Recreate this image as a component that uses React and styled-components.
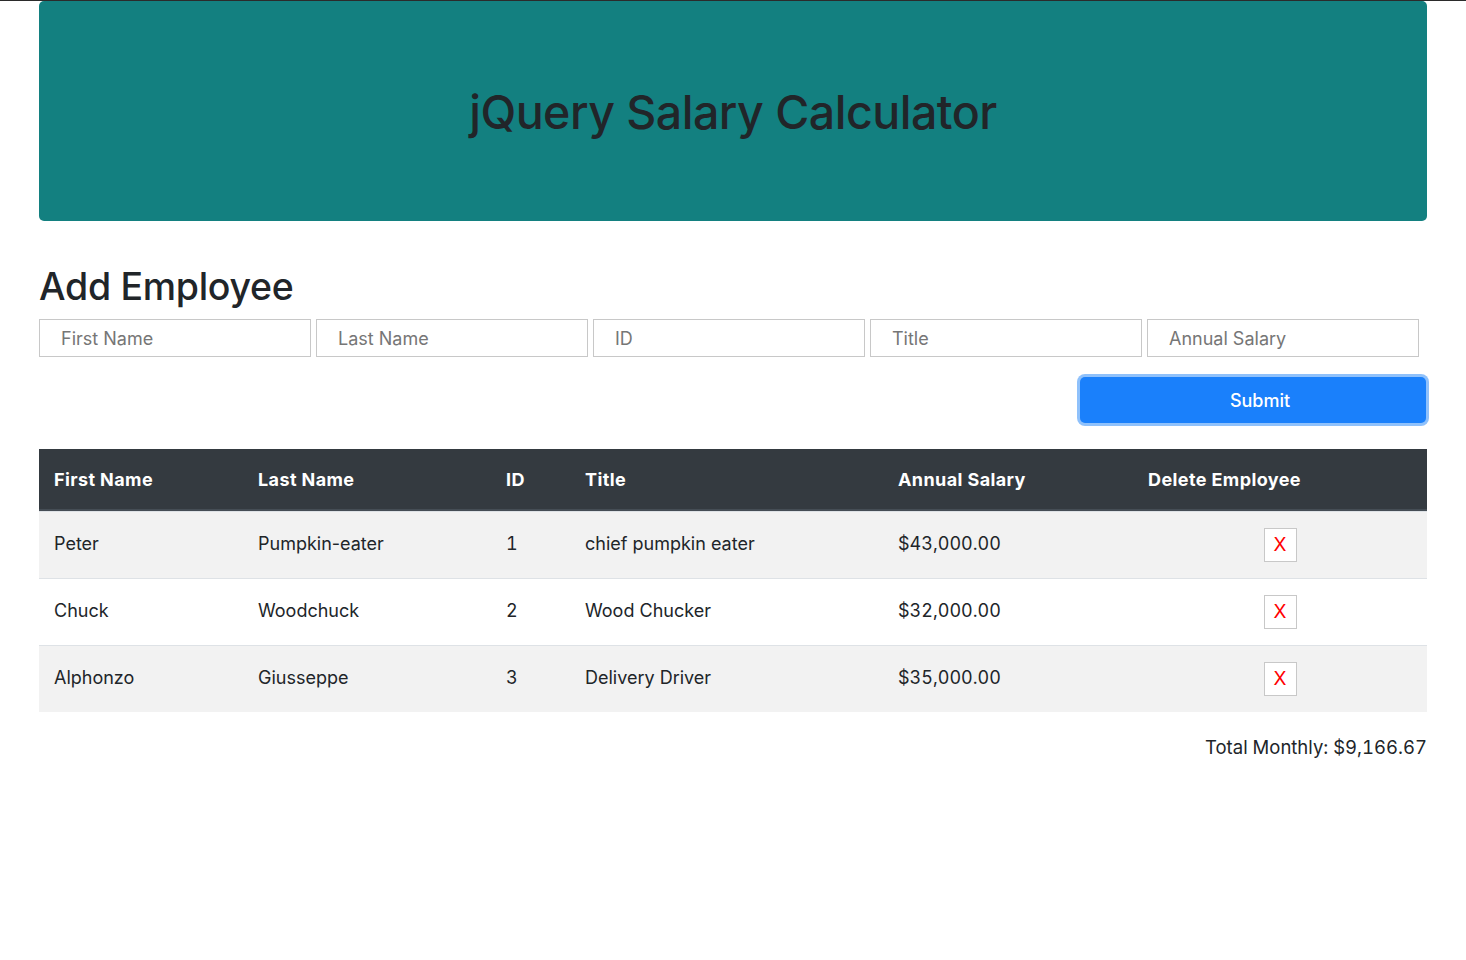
import React from 'react'
import styled, { createGlobalStyle } from 'styled-components'

const GlobalStyle = createGlobalStyle`
body {
  margin: 0;
  border-top: 1px solid #2b2b2b;
  font-family: Inter, "Noto Sans", "Liberation Sans", sans-serif;
  font-size: 18px;
  color: #212529;
  background: #fff;
}
`

const Page = styled.div`
padding: 0 39px;
`

const Jumbotron = styled.header`
height: 220px;
background-color: #138080;
border-radius: 5px;
display: flex;
align-items: center;
justify-content: center;
`

const Title = styled.h1`
margin: 0 0 -2px;
font-size: 46.5px;
font-weight: 500;
letter-spacing: -0.5px;
color: #212529;
`

const SectionTitle = styled.h2`
margin: 44px 0 10px;
font-size: 37.5px;
font-weight: 500;
line-height: 44px;
letter-spacing: -0.3px;
`

const InputRow = styled.div`
display: flex;
gap: 5px;
`

const Input = styled.input`
width: 272px;
height: 38px;
box-sizing: border-box;
border: 1px solid #c8c8c8;
border-radius: 0;
padding: 0 21px;
font-family: inherit;
font-size: 18px;
color: #212529;
&::placeholder {
  color: #767676;
}
`

const ButtonRow = styled.div`
display: flex;
justify-content: flex-end;
margin-top: 20px;
`

const SubmitButton = styled.button`
width: 346px;
height: 46px;
margin-right: 1px;
padding: 0 0 0 14px;
background-color: #1a80fb;
color: #fff;
border: none;
border-radius: 5px;
box-shadow: 0 0 0 3px #8fc1fb;
font-family: inherit;
font-size: 18px;
font-weight: 500;
cursor: pointer;
`

const Table = styled.table`
width: 100%;
margin-top: 26px;
border-collapse: separate;
border-spacing: 0;
table-layout: fixed;
`

const Th = styled.th`
box-sizing: border-box;
width: ${props => props.w}px;
background-color: #343a40;
color: #fff;
text-align: left;
font-weight: 700;
letter-spacing: 0.4px;
line-height: 29px;
padding: 16px 15px 15px;
border-bottom: 2px solid #454d55;
`

const Row = styled.tr`
background-color: ${props => props.striped ? '#f2f2f2' : '#fff'};
`

const Td = styled.td`
padding: 16px 15px 15px;
line-height: 31px;
height: 35px;
vertical-align: top;
border-top: 1px solid #dee2e6;
text-align: ${props => props.center ? 'center' : 'left'};
font-variant-numeric: ${props => props.numeric ? 'tabular-nums' : 'normal'};
`

const DeleteButton = styled.button`
display: inline-block;
vertical-align: top;
width: 33px;
height: 34px;
background: #fff;
border: 1px solid #c8c8c8;
color: #ff0000;
font-family: inherit;
font-size: 19px;
line-height: 30px;
padding: 0;
cursor: pointer;
`

const Total = styled.div`
margin-top: 22px;
text-align: right;
font-size: 18.5px;
line-height: 26px;
font-variant-numeric: tabular-nums;
`

const employees = [
  { first: 'Peter', last: 'Pumpkin-eater', id: 1, title: 'chief pumpkin eater', salary: '$43,000.00' },
  { first: 'Chuck', last: 'Woodchuck', id: 2, title: 'Wood Chucker', salary: '$32,000.00' },
  { first: 'Alphonzo', last: 'Giusseppe', id: 3, title: 'Delivery Driver', salary: '$35,000.00' },
]

const columns = [
  ['First Name', 204],
  ['Last Name', 248],
  ['ID', 79],
  ['Title', 313],
  ['Annual Salary', 250],
  ['Delete Employee', 294],
]

const App = () => {
  return (
    <>
      <GlobalStyle />
      <Page>
        <Jumbotron>
          <Title>jQuery Salary Calculator</Title>
        </Jumbotron>
        <SectionTitle>Add Employee</SectionTitle>
        <InputRow>
          <Input placeholder="First Name" />
          <Input placeholder="Last Name" />
          <Input placeholder="ID" />
          <Input placeholder="Title" />
          <Input placeholder="Annual Salary" />
        </InputRow>
        <ButtonRow>
          <SubmitButton>Submit</SubmitButton>
        </ButtonRow>
        <Table>
          <thead>
            <tr>
              {columns.map(([label, w]) => (
                <Th key={label} w={w}>{label}</Th>
              ))}
            </tr>
          </thead>
          <tbody>
            {employees.map((e, i) => (
              <Row key={e.id} striped={i % 2 === 0}>
                <Td>{e.first}</Td>
                <Td>{e.last}</Td>
                <Td numeric>{e.id}</Td>
                <Td>{e.title}</Td>
                <Td numeric>{e.salary}</Td>
                <Td center>
                  <DeleteButton>X</DeleteButton>
                </Td>
              </Row>
            ))}
          </tbody>
        </Table>
        <Total>Total Monthly: $9,166.67</Total>
      </Page>
    </>
  )
}

export default App
